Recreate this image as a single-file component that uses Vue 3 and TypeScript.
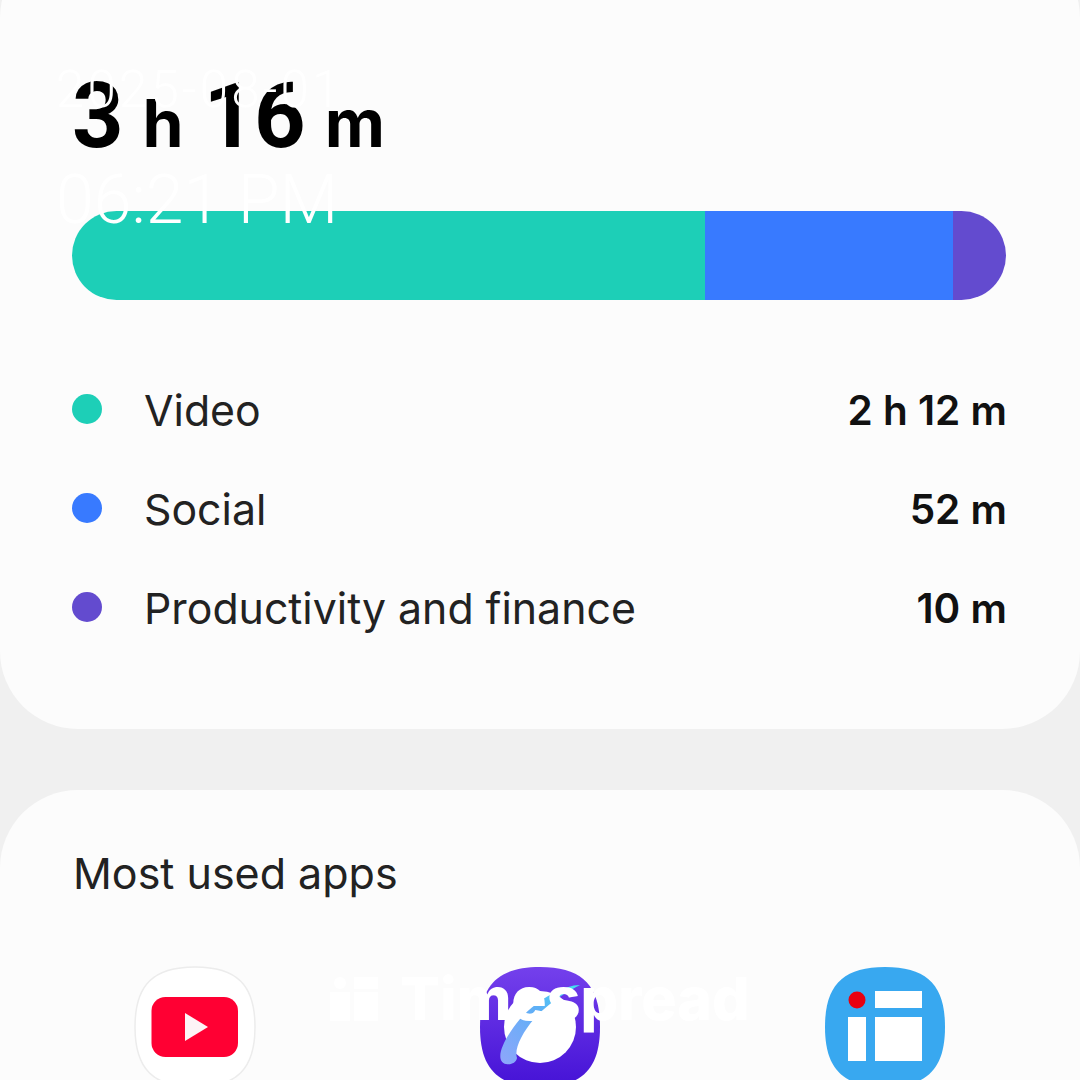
<script setup lang="ts">
const categories = [
  { name: 'Video', color: '#1dcfb7', share: 67.8, digits: [['2', 'h'], ['12', 'm']] },
  { name: 'Social', color: '#387aff', share: 26.5, digits: [['52', 'm']] },
  { name: 'Productivity and finance', color: '#634bcf', share: 5.7, digits: [['10', 'm']] },
]
const squircle = 'M60 0C102 0 120 18 120 60C120 102 102 120 60 120C18 120 0 102 0 60C0 18 18 0 60 0Z'
</script>

<template>
  <div class="page">
    <section class="card summary">
      <h1 class="total">
        <span>3</span> <small>h</small> <span>16</span> <small>m</small>
      </h1>
      <div class="bar">
        <div
          v-for="c in categories"
          :key="c.name"
          class="seg"
          :style="{ width: c.share + '%', background: c.color }"
        />
      </div>
      <ul class="legend">
        <li v-for="c in categories" :key="c.name" class="row">
          <i class="dot" :style="{ background: c.color }" />
          <span class="name">{{ c.name }}</span>
          <b class="value">{{ c.digits.map((d) => d.join(' ')).join(' ') }}</b>
        </li>
      </ul>
    </section>

    <section class="card apps">
      <h2 class="apps-title">Most used apps</h2>
      <div class="icons">
        <svg class="icon" viewBox="0 0 120 130">
          <path :d="squircle" fill="#fff" stroke="#ececec" stroke-width="1.5" />
          <rect x="16.5" y="30" width="86.5" height="60" rx="14" fill="#ff0033" />
          <path d="M50 46L73 60L50 74Z" fill="#fdf4f6" />
        </svg>
        <svg class="icon" viewBox="0 0 120 130">
          <defs>
            <linearGradient id="net" x1="0" y1="0" x2="0" y2="1">
              <stop offset="0" stop-color="#7440ec" />
              <stop offset="1" stop-color="#4512d6" />
            </linearGradient>
            <linearGradient id="ring" x1="0" y1="1" x2="1" y2="0">
              <stop offset="0" stop-color="#8fa6fb" />
              <stop offset="0.6" stop-color="#5cb0f6" />
              <stop offset="1" stop-color="#3fe6ef" />
            </linearGradient>
          </defs>
          <path :d="squircle" fill="url(#net)" />
          <circle cx="60" cy="60" r="36" fill="#fff" />
          <path d="M26 97C14 94 22 74 40 52C58 32 84 18 100 18C88 24 68 36 54 52C42 66 34 82 37 91C36 96 31 98 26 97Z" fill="url(#ring)" />
        </svg>
        <svg class="icon" viewBox="0 0 120 130">
          <path :d="squircle" fill="#38a8f0" />
          <circle cx="32" cy="33" r="8.5" fill="#e8000f" />
          <rect x="50" y="24" width="47" height="17" fill="#fff" />
          <rect x="23" y="50" width="18" height="44" fill="#fff" />
          <rect x="50" y="50" width="47" height="44" fill="#fff" />
        </svg>
      </div>
    </section>

    <div class="stamp">
      <div class="date">2025-08-01</div>
      <div class="time">06:21 PM</div>
    </div>
    <div class="mark">
      <svg width="48" height="44" viewBox="0 0 48 44">
        <circle cx="10" cy="6" r="6" fill="#fff" />
        <rect x="0" y="15" width="20" height="29" fill="#fff" />
        <rect x="24" y="0" width="24" height="12" fill="#fff" />
        <rect x="24" y="15" width="24" height="29" fill="#fff" />
      </svg>
      <span>Timespread</span>
    </div>
  </div>
</template>

<style scoped>
.page {
  position: relative;
  width: 1080px;
  height: 1080px;
  overflow: hidden;
  background: #f0f0f0;
  font-family: Inter, "Liberation Sans", sans-serif;
  color: #111;
}
.card {
  background: #fcfcfc;
  border-radius: 78px;
}
.summary {
  height: 789px;
  margin-top: -60px;
  padding: 0 74px 0 72px;
  box-sizing: border-box;
  display: flex;
  flex-direction: column;
}
.total {
  margin: 132px 0 0;
  height: 90px;
  font-family: Roboto, Inter, sans-serif;
  font-weight: 700;
  font-size: 90px;
  line-height: 90px;
  letter-spacing: -1px;
  word-spacing: -1.5px;
  color: #000;
  white-space: pre;
}
.total small {
  font-family: Inter, sans-serif;
  font-size: 66px;
  font-weight: 700;
  letter-spacing: 0;
}
.bar {
  display: flex;
  height: 89px;
  margin-top: 49px;
  border-radius: 45px;
  overflow: hidden;
}
.seg {
  height: 100%;
}
.legend {
  list-style: none;
  margin: 85px 0 0;
  padding: 0;
  display: flex;
  flex-direction: column;
  gap: 49px;
}
.row {
  display: flex;
  align-items: center;
  height: 50px;
  font-size: 42.8px;
}
.dot {
  width: 30px;
  height: 30px;
  border-radius: 50%;
  margin-right: 43px;
  position: relative;
  top: -1px;
}
.name {
  flex: 1;
  margin-left: -1px;
  color: #222;
}
.value {
  font-size: 40.5px;
  font-weight: 600;
  margin-right: -1px;
}
.apps {
  margin-top: 61px;
  height: 400px;
  padding-top: 58px;
  box-sizing: border-box;
}
.apps-title {
  margin: 0 0 0 73px;
  font-size: 43px;
  line-height: 50px;
  font-weight: 400;
  color: #222;
}
.icons {
  display: grid;
  grid-template-columns: repeat(3, 345px);
  justify-content: center;
  justify-items: center;
  margin-top: 69px;
}
.icon {
  width: 120px;
  height: 130px;
  overflow: visible;
}
.stamp {
  position: absolute;
  left: 56px;
  top: 60px;
  font-family: Roboto, sans-serif;
  font-weight: 300;
  color: #fff;
}
.date {
  font-size: 51px;
  line-height: 60px;
  letter-spacing: 3.2px;
}
.time {
  margin-top: 50px;
  font-size: 68px;
  line-height: 60px;
}
.mark {
  position: absolute;
  left: 330px;
  top: 977px;
  display: flex;
  align-items: center;
  gap: 22px;
  color: #fff;
  font-weight: 800;
  font-size: 59px;
  line-height: 44px;
}
</style>

<style>
html,
body {
  margin: 0;
  background: #f0f0f0;
}
</style>
